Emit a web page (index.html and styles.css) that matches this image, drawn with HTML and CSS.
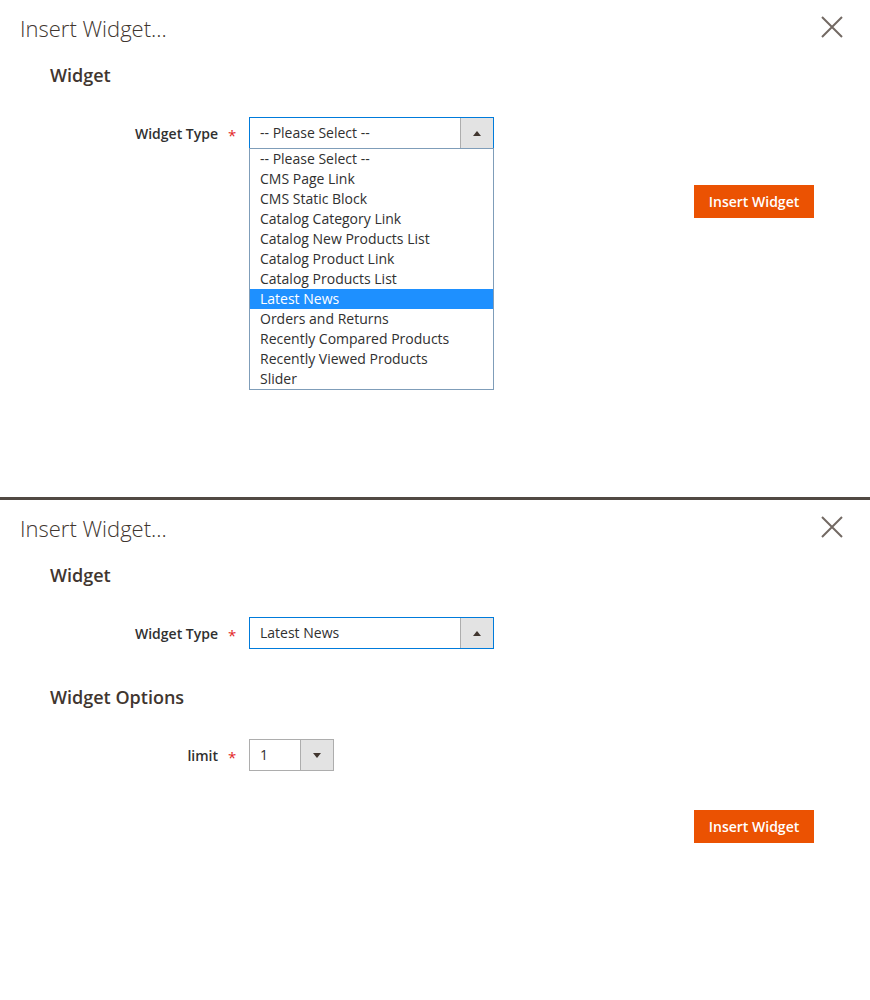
FILE: index.html
```html
<!DOCTYPE html>
<html>
<head>
<meta charset="utf-8">
<link rel="stylesheet" href="styles.css">
</head>
<body>
<section class="modal">
  <header class="modal-header">
    <h1 class="modal-title">Insert Widget...</h1>
    <button class="close" aria-label="Close"><svg width="22" height="22" viewBox="0 0 22 22"><path d="M1 1L21 21M21 1L1 21" stroke="#736963" stroke-width="2" fill="none"/></svg></button>
  </header>
  <div class="modal-body">
    <h2 class="legend">Widget</h2>
    <div class="field">
      <label class="label">Widget Type</label>
      <span class="req">*</span>
      <div class="select wide focus">
        <span class="value">-- Please Select --</span>
        <span class="arrow"><span class="tri up"></span></span>
        <ul class="options">
          <li>-- Please Select --</li>
          <li>CMS Page Link</li>
          <li>CMS Static Block</li>
          <li>Catalog Category Link</li>
          <li>Catalog New Products List</li>
          <li>Catalog Product Link</li>
          <li>Catalog Products List</li>
          <li class="sel">Latest News</li>
          <li>Orders and Returns</li>
          <li>Recently Compared Products</li>
          <li>Recently Viewed Products</li>
          <li>Slider</li>
        </ul>
      </div>
    </div>
    <div class="actions top-actions"><button class="primary">Insert Widget</button></div>
  </div>
</section>
<div class="divider"></div>
<section class="modal second">
  <header class="modal-header">
    <h1 class="modal-title">Insert Widget...</h1>
    <button class="close" aria-label="Close"><svg width="22" height="22" viewBox="0 0 22 22"><path d="M1 1L21 21M21 1L1 21" stroke="#736963" stroke-width="2" fill="none"/></svg></button>
  </header>
  <div class="modal-body">
    <h2 class="legend">Widget</h2>
    <div class="field">
      <label class="label">Widget Type</label>
      <span class="req">*</span>
      <div class="select wide focus">
        <span class="value">Latest News</span>
        <span class="arrow"><span class="tri up"></span></span>
      </div>
    </div>
    <h2 class="legend options-legend">Widget Options</h2>
    <div class="field">
      <label class="label">limit</label>
      <span class="req">*</span>
      <div class="select small">
        <span class="value">1</span>
        <span class="arrow"><span class="tri down"></span></span>
      </div>
    </div>
    <div class="actions bottom-actions"><button class="primary">Insert Widget</button></div>
  </div>
</section>
</body>
</html>
```
FILE: styles.css
```css
* { box-sizing: border-box; }
html, body { margin: 0; padding: 0; background: #fff; }
body { font-family: "Open Sans", "Liberation Sans", sans-serif; color: #303030; width: 870px; }
.modal { height: 497px; position: relative; }
.modal.second { height: 500px; }
.divider { height: 3px; background: #514943; }
.modal-header { display: flex; justify-content: space-between; align-items: flex-start; padding: 12px 27px 0 20px; height: 63px; }
.modal-title { margin: 0; font-weight: 300; font-size: 22px; line-height: 32px; color: #41362f; }
.close { border: 0; background: none; padding: 0; margin-top: 4px; width: 22px; height: 22px; cursor: pointer; }
.close svg { display: block; }
.modal-body { padding-left: 50px; }
.legend { margin: 0; font-size: 18px; font-weight: 600; line-height: 24px; color: #41362f; height: 24px; }
.field { display: flex; align-items: center; margin-top: 30px; }
.label { width: 168px; text-align: right; font-size: 14px; font-weight: 600; color: #303030; }
.req { color: #e22626; font-size: 15px; width: 31px; padding-left: 10px; line-height: 1; padding-top: 4px; }
.select { position: relative; height: 32px; border: 1px solid #adadad; display: flex; align-items: center; background: #fff; }
.select.focus { border-color: #007bdb; }
.select.wide { width: 245px; }
.select.small { width: 85px; }
.value { flex: 1; padding-left: 10px; font-size: 14px; color: #303030; line-height: 30px; }
.arrow { width: 33px; height: 30px; background: #e3e3e3; border-left: 1px solid #adadad; display: flex; align-items: center; justify-content: center; }
.tri { width: 0; height: 0; border-left: 4px solid transparent; border-right: 4px solid transparent; }
.tri.up { border-bottom: 5px solid #41362f; }
.tri.down { border-top: 5px solid #41362f; }
.options { position: absolute; left: -1px; top: 30px; width: 245px; margin: 0; padding: 0; list-style: none; border: 1px solid #7f9db9; background: #fff; z-index: 2; }
.options li { height: 20px; line-height: 20px; padding-left: 10px; font-size: 14px; color: #303030; }
.options li.sel { background: #1e90ff; color: #fff; }
.actions { display: flex; justify-content: flex-end; padding-right: 56px; }
.top-actions { margin-top: 36px; }
.bottom-actions { margin-top: 39px; }
.options-legend { margin-top: 36px; }
.primary { width: 120px; height: 33px; background: #eb5202; border: 0; color: #fff; font-family: "Open Sans", "Liberation Sans", sans-serif; font-size: 14px; font-weight: 600; padding: 0; }
```
